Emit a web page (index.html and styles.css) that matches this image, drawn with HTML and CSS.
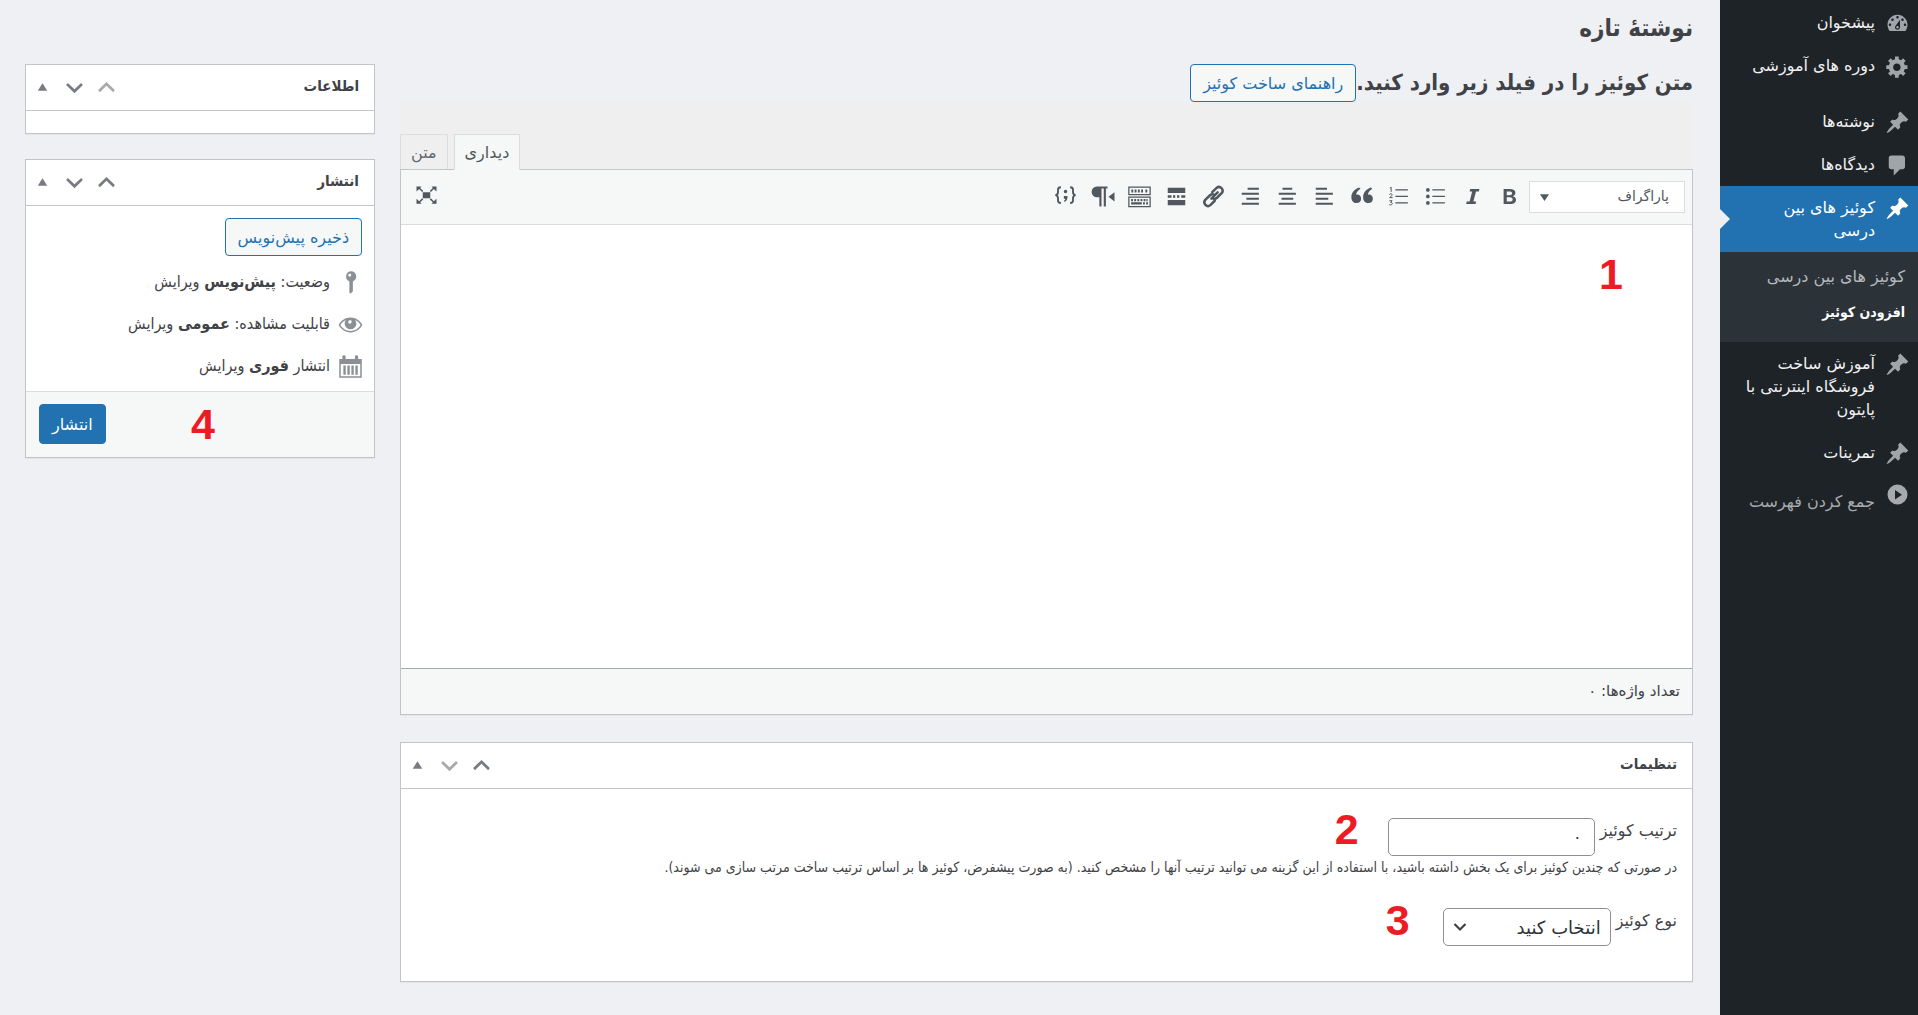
FILE: index.html
```html
<!DOCTYPE html>
<html lang="fa" dir="rtl">
<head>
<meta charset="utf-8">
<meta name="viewport" content="width=device-width, initial-scale=1">
<title>نوشتهٔ تازه</title>
<link rel="stylesheet" href="styles.css">
</head>
<body>
<svg class="sprite" aria-hidden="true">
  <symbol id="i-dashboard" viewBox="0 0 20 20"><path fill-rule="evenodd" d="M3.76 16h12.48c1.1-1.37 1.76-3.11 1.76-5 0-4.42-3.58-8-8-8s-8 3.58-8 8c0 1.89.66 3.63 1.76 5zM10 4c.55 0 1 .45 1 1s-.45 1-1 1-1-.45-1-1 .45-1 1-1zM6 6c.55 0 1 .45 1 1s-.45 1-1 1-1-.45-1-1 .45-1 1-1zm8 0c.55 0 1 .45 1 1s-.45 1-1 1-1-.45-1-1 .45-1 1-1zm-5.37 5.55L12 7v6c0 1.1-.9 2-2 2s-2-.9-2-2c0-.57.24-1.08.63-1.45zM4 10c.55 0 1 .45 1 1s-.45 1-1 1-1-.45-1-1 .45-1 1-1zm12 0c.55 0 1 .45 1 1s-.45 1-1 1-1-.45-1-1 .45-1 1-1zm-5 3c0-.55-.45-1-1-1s-1 .45-1 1 .45 1 1 1 1-.45 1-1z"/></symbol>
  <symbol id="i-gear" viewBox="0 0 20 20"><path fill-rule="evenodd" d="M18 12h-2.18c-.17.7-.44 1.35-.81 1.93l1.54 1.54-2.1 2.1-1.54-1.54c-.58.36-1.23.63-1.91.79V19H8v-2.18c-.68-.16-1.33-.43-1.91-.79l-1.54 1.54-2.12-2.12 1.54-1.54c-.36-.58-.63-1.23-.79-1.91H1V9.03h2.17c.16-.7.44-1.35.8-1.94L2.43 5.55l2.1-2.1 1.54 1.54c.58-.37 1.24-.64 1.93-.81V2h3v2.18c.68.16 1.33.43 1.91.79l1.54-1.54 2.12 2.12-1.54 1.54c.36.59.64 1.24.8 1.94H18V12zm-8.5 1.5c1.66 0 3-1.34 3-3s-1.34-3-3-3-3 1.34-3 3 1.34 3 3 3z"/></symbol>
  <symbol id="i-pin" viewBox="0 0 20 20"><path d="M10.44 3.02l1.82-1.82 6.36 6.35-1.83 1.82c-1.05-.68-2.48-.57-3.41.36l-.75.75c-.92.93-1.04 2.35-.35 3.41l-1.83 1.82-2.41-2.41-2.8 2.79c-.42.42-3.38 2.71-3.8 2.29s1.86-3.39 2.28-3.81l2.79-2.79L4.1 9.36l1.83-1.82c1.05.69 2.48.57 3.4-.36l.75-.75c.93-.92 1.05-2.35.36-3.41z"/></symbol>
  <symbol id="i-comment" viewBox="0 0 20 20"><path d="M5 2h9c1.1 0 2 .9 2 2v7c0 1.1-.9 2-2 2h-2l-5 5v-5H5c-1.1 0-2-.9-2-2V4c0-1.1.9-2 2-2z"/></symbol>
  <symbol id="i-collapse" viewBox="0 0 20 20"><path fill-rule="evenodd" d="M10 2a8 8 0 1 0 0 16 8 8 0 0 0 0-16zM8 6.3l5.6 3.9L8 14z"/></symbol>
  <symbol id="i-up" viewBox="0 0 20 20"><path d="M10 5.500l6.700 6.500-1.400 1.700L10 8.600l-5.300 5.100L3.300 12z"/></symbol>
  <symbol id="i-down" viewBox="0 0 20 20"><path d="M10 14.500l6.700-6.500-1.400-1.700L10 11.400 4.700 6.300 3.300 8z"/></symbol>
  <symbol id="i-toggle" viewBox="0 0 20 20"><path d="M10 6.500l3.800 6H6.200z"/></symbol>
  <symbol id="i-caret" viewBox="0 0 10 10"><path d="M0 1.500h10L5 9z"/></symbol>
  <symbol id="i-chevron" viewBox="0 0 14 14"><path d="M1.500 4l5.500 5.500L12.500 4" fill="none" stroke="currentColor" stroke-width="2.200"/></symbol>
  <symbol id="i-key" viewBox="0 0 20 20"><path fill-rule="evenodd" d="M10.500 1a4.200 4.200 0 0 1 1.400 8.100V17l-2 2-.8-1V9.100A4.200 4.200 0 0 1 10.500 1zM9.300 2.900a1.200 1.200 0 1 0 .1 2.400 1.200 1.200 0 0 0-.1-2.400z"/></symbol>
  <symbol id="i-eye" viewBox="0 0 20 20"><path fill-rule="evenodd" d="M10 4.400c4.300 0 7.900 2.700 9.500 6-1.600 3.200-5.200 5.900-9.500 5.900S2.100 13.600.5 10.400c1.600-3.300 5.200-6 9.500-6zM6.300 6.300c-1.900.8-3.500 2.300-4.400 4.100 1.500 2.700 4.500 4.700 8.100 4.700s6.600-2 8.100-4.700c-.9-1.800-2.500-3.300-4.400-4.100a4.700 4.700 0 1 1-7.400 0zM9.500 6.500a1.400 1.400 0 1 0 .1 2.800 1.400 1.400 0 0 0-.1-2.800z"/></symbol>
  <symbol id="i-calendar" viewBox="0 0 20 20"><path fill-rule="evenodd" d="M1 4h2.500V2.200c0-1.600 2.600-1.600 2.600 0V4h7.400V2.200c0-1.600 2.600-1.600 2.600 0V4H19v15H1zM2.200 8v9.800h15.600V8zM4.300 9.200h1.900v7.300H4.300zm3.200 0h1.900v7.300H7.500zm3.200 0h1.900v7.300h-1.900zm3.200 0h1.900v7.300h-1.900z"/></symbol>
  <symbol id="t-bold" viewBox="0 0 20 20"><path fill-rule="evenodd" d="M5.300 4h4.800c3 0 4.600 1 4.600 3 0 1.500-.8 2.400-2.200 2.700 1.700.3 2.700 1.200 2.700 2.900 0 2.200-1.700 3.400-4.700 3.400H5.300zm2.500 1.900v3h2.100c1.500 0 2.200-.5 2.200-1.500s-.8-1.500-2.300-1.500zm0 4.700V14h2.400c1.500 0 2.300-.6 2.300-1.700s-.8-1.700-2.400-1.700z"/></symbol>
  <symbol id="t-italic" viewBox="0 0 20 20"><path d="M8.200 4h7.300l-.4 1.900h-2.300L10.700 14h2.200l-.5 2H4.900l.5-2h2.300l2-8.100H7.700z"/></symbol>
  <symbol id="t-ul" viewBox="0 0 20 20"><path d="M3.900 3.200a1.500 1.500 0 1 1 0 3 1.500 1.500 0 0 1 0-3zm0 5.200a1.500 1.500 0 1 1 0 3 1.500 1.500 0 0 1 0-3zm0 5.200a1.500 1.500 0 1 1 0 3 1.500 1.500 0 0 1 0-3zM7.500 4.200h10v1h-10zm0 5.200h10v1h-10zm0 5.200h10v1h-10z"/></symbol>
  <symbol id="t-ol" viewBox="0 0 20 20"><path d="M7.500 4.200h10v1h-10zm0 5.200h10v1h-10zm0 5.200h10v1h-10z"/><path fill="none" stroke="currentColor" stroke-width=".8" d="M3.100 3.300l1-.7v3.700M2.700 8.600c.3-1.200 2.500-1 2.200.3-.2.700-1.300 1.300-2 2h2.400M2.700 13.400h2.200l-1.200 1.300c2.200 0 1.600 2.700-1.100 1.800"/></symbol>
  <symbol id="t-quote" viewBox="0 0 20 20"><path d="M9.200 3.800C6.800 5.200 5.800 7 5.700 8.500c2.200-.6 4 .8 4 3.200 0 2.100-1.500 3.500-3.600 3.500-2.500 0-4.200-1.800-4.200-4.700 0-3.300 2.100-6.100 6.200-7.700zM18.600 3.800c-2.400 1.400-3.400 3.200-3.500 4.700 2.200-.6 4 .8 4 3.200 0 2.100-1.500 3.500-3.600 3.500-2.500 0-4.200-1.800-4.200-4.700 0-3.300 2.100-6.100 6.200-7.700z"/></symbol>
  <symbol id="t-left" viewBox="0 0 20 20"><path d="M3 3h9v1.600H3zm0 4h13.700v1.600H3zm0 4h10v1.600H3zm0 4h13.700v1.600H3z"/></symbol>
  <symbol id="t-center" viewBox="0 0 20 20"><path d="M6 3h7.800v1.600H6zM3 7h13.700v1.600H3zm2.200 4h9.400v1.600H5.200zM3 15h13.700v1.600H3z"/></symbol>
  <symbol id="t-right" viewBox="0 0 20 20"><path d="M7.700 3h9v1.600h-9zM3 7h13.700v1.600H3zm3.700 4h10v1.600h-10zM3 15h13.700v1.600H3z"/></symbol>
  <symbol id="t-link" viewBox="0 0 20 20"><g fill="none" stroke="currentColor" stroke-width="2" stroke-linecap="round"><path d="M8.300 11.700l5-5"/><path d="M9 6.500l3.500-3.400c2.600-2.300 6.400 1.400 4 4.200l-3.700 3.700c-.9.800-2.100 1-3.100.5"/><path d="M11 13.400l-3.500 3.500c-2.700 2.300-6.400-1.500-4.100-4.200l3.800-3.700c.9-.8 2.100-1 3.100-.5"/></g></symbol>
  <symbol id="t-more" viewBox="0 0 20 20"><path d="M3 3h14v4.200H3zm0 6h3v2H3zm4.200 0H9v2H7.200zm3.200 0h1.900v2h-1.900zm3.400 0H17v2h-3.200zM3 12.800h14V17H3z"/></symbol>
  <symbol id="t-kitchen" viewBox="0 0 20 20"><path fill-rule="evenodd" d="M1 2h18v7H1zm1 1v5h16V3zm1.500 1.300H5v2.400H3.500zm2.600 0h1.500v2.400H6.100zm2.600 0h1.500v2.400H8.700zm2.600 0h1.500v2.400h-1.500zm3.400 0h1.500v2.400h-1.500zM1 10h18v8.500H1zm1 1v6.500h16V11zm1.300 1h1.500v1.700H3.300zm2.500 0h1.500v1.700H5.800zm2.500 0h1.500v1.700H8.300zm2.500 0h1.500v1.700h-1.500zm2.500 0h1.500v1.700h-1.500zm2.200 0h1v1.700h-1zM3.300 14.600h8.500v1.800H3.300zm9.500 0h1.500v1.800h-1.500zm2.500 0h1.500v1.800h-1.500z"/></symbol>
  <symbol id="t-ltr" viewBox="0 0 20 20"><path d="M5.600 2H14v1.600h-1.300V18H11V3.600H9.200V18H7.500v-7.400H5.600a4.300 4.300 0 0 1 0-8.600zM19.600 6.500v7.400L14.800 10.200z"/></symbol>
  <symbol id="t-code" viewBox="0 0 20 20"><g fill="none" stroke="currentColor" stroke-width="1.500"><path d="M6.300 2.600c-1.700 0-2.300.5-2.300 2v2c0 1.300-.5 2-2 2.300 1.500.3 2 1 2 2.300v2c0 1.500.6 2 2.300 2M13.700 2.600c1.700 0 2.300.5 2.300 2v2c0 1.300.5 2 2 2.300-1.500.3-2 1-2 2.300v2c0 1.500-.6 2-2.300 2"/></g><path d="M10 4.600a1.400 1.400 0 1 1 0 2.800 1.400 1.400 0 0 1 0-2.800zM8.700 9.500h2.900c.2 2.500-.8 4.200-2.600 4.700l-.3-.9c.8-.4 1.100-.8 1.100-1.600H8.700z"/></symbol>
  <symbol id="t-full" viewBox="0 0 20 20"><path d="M7 6.500h6v4.800H7zM2 2h4L4.900 3.200l2.500 2.300-.9.900L4.100 4 2 6zm16 0h-4l1.100 1.200-2.500 2.300.9.900L15.900 4 18 6zM2 15.800h4l-1.100-1.200 2.500-2.300-.9-.9-2.400 2.400-2.100-2zm16 0h-4l1.100-1.200-2.500-2.300.9-.9 2.400 2.400 2.100-2z"/></symbol>
</svg>

<div class="shell">
  <nav class="menu" aria-label="فهرست مدیریت">
    <a class="menu-item" href="#"><svg class="icon"><use href="#i-dashboard"/></svg><span>پیشخوان</span></a>
    <a class="menu-item menu-group-end" href="#"><svg class="icon"><use href="#i-gear"/></svg><span>دوره های آموزشی</span></a>
    <a class="menu-item" href="#"><svg class="icon"><use href="#i-pin"/></svg><span>نوشته‌ها</span></a>
    <a class="menu-item" href="#"><svg class="icon"><use href="#i-comment"/></svg><span>دیدگاه‌ها</span></a>
    <a class="menu-item menu-current" href="#"><svg class="icon"><use href="#i-pin"/></svg><span>کوئیز های بین درسی</span></a>
    <div class="submenu">
      <a class="submenu-item" href="#">کوئیز های بین درسی</a>
      <a class="submenu-item submenu-current" href="#">افزودن کوئیز</a>
    </div>
    <a class="menu-item" href="#"><svg class="icon"><use href="#i-pin"/></svg><span>آموزش ساخت فروشگاه اینترنتی با پایتون</span></a>
    <a class="menu-item" href="#"><svg class="icon"><use href="#i-pin"/></svg><span>تمرینات</span></a>
    <button class="menu-collapse" type="button"><svg class="icon"><use href="#i-collapse"/></svg><span>جمع کردن فهرست</span></button>
  </nav>

  <main class="content">
    <h1 class="page-title">نوشتهٔ تازه</h1>
    <div class="columns">
      <div class="primary">
        <div class="lead">
          <h2 class="lead-title">متن کوئیز را در فیلد زیر وارد کنید.</h2>
          <button class="button" type="button">راهنمای ساخت کوئیز</button>
        </div>

        <section class="editor">
          <div class="tabs">
            <button class="tab tab-active" type="button">دیداری</button>
            <button class="tab" type="button">متن</button>
          </div>
          <div class="editor-box">
            <div class="toolbar">
              <div class="format">
                <select class="format-select" aria-label="قالب"><option>پاراگراف</option></select>
                <svg class="format-caret"><use href="#i-caret"/></svg>
              </div>
              <button class="tool" type="button" aria-label="ضخیم"><svg class="icon"><use href="#t-bold"/></svg></button>
              <button class="tool" type="button" aria-label="مورب"><svg class="icon"><use href="#t-italic"/></svg></button>
              <button class="tool" type="button" aria-label="فهرست نقطه‌ای"><svg class="icon"><use href="#t-ul"/></svg></button>
              <button class="tool" type="button" aria-label="فهرست شماره‌ای"><svg class="icon"><use href="#t-ol"/></svg></button>
              <button class="tool" type="button" aria-label="نقل قول"><svg class="icon"><use href="#t-quote"/></svg></button>
              <button class="tool" type="button" aria-label="چپ‌چین"><svg class="icon"><use href="#t-left"/></svg></button>
              <button class="tool" type="button" aria-label="وسط‌چین"><svg class="icon"><use href="#t-center"/></svg></button>
              <button class="tool" type="button" aria-label="راست‌چین"><svg class="icon"><use href="#t-right"/></svg></button>
              <button class="tool" type="button" aria-label="پیوند"><svg class="icon"><use href="#t-link"/></svg></button>
              <button class="tool" type="button" aria-label="ادامه"><svg class="icon"><use href="#t-more"/></svg></button>
              <button class="tool" type="button" aria-label="نوار ابزار"><svg class="icon"><use href="#t-kitchen"/></svg></button>
              <button class="tool" type="button" aria-label="چپ به راست"><svg class="icon"><use href="#t-ltr"/></svg></button>
              <button class="tool" type="button" aria-label="کد"><svg class="icon"><use href="#t-code"/></svg></button>
              <button class="tool tool-end" type="button" aria-label="تمام صفحه"><svg class="icon"><use href="#t-full"/></svg></button>
            </div>
            <div class="writing">
              <textarea class="writing-area" aria-label="متن کوئیز"></textarea>
              <span class="mark mark-1">1</span>
            </div>
            <div class="statusbar">تعداد واژه‌ها: ۰</div>
          </div>
        </section>

        <section class="panel">
          <header class="panel-head">
            <h2 class="panel-title">تنظیمات</h2>
            <div class="panel-actions">
              <button class="panel-action" type="button" aria-label="بالا"><svg class="icon"><use href="#i-up"/></svg></button>
              <button class="panel-action panel-action-off" type="button" aria-label="پایین"><svg class="icon"><use href="#i-down"/></svg></button>
              <button class="panel-action" type="button" aria-label="بستن"><svg class="icon"><use href="#i-toggle"/></svg></button>
            </div>
          </header>
          <div class="settings">
            <div class="field">
              <label class="field-label" for="quiz-order">ترتیب کوئیز</label>
              <div class="control">
                <input class="field-input" id="quiz-order" type="text" value="۰">
                <span class="mark mark-2">2</span>
              </div>
            </div>
            <p class="hint">در صورتی که چندین کوئیز برای یک بخش داشته باشید، با استفاده از این گزینه می توانید ترتیب آنها را مشخص کنید. (به صورت پیشفرض، کوئیز ها بر اساس ترتیب ساخت مرتب سازی می شوند).</p>
            <div class="field">
              <label class="field-label" for="quiz-type">نوع کوئیز</label>
              <div class="control">
                <select class="field-select" id="quiz-type"><option>انتخاب کنید</option></select>
                <svg class="select-arrow"><use href="#i-chevron"/></svg>
                <span class="mark mark-3">3</span>
              </div>
            </div>
          </div>
        </section>
      </div>

      <aside class="secondary">
        <section class="panel">
          <header class="panel-head">
            <h2 class="panel-title">اطلاعات</h2>
            <div class="panel-actions">
              <button class="panel-action panel-action-off" type="button" aria-label="بالا"><svg class="icon"><use href="#i-up"/></svg></button>
              <button class="panel-action" type="button" aria-label="پایین"><svg class="icon"><use href="#i-down"/></svg></button>
              <button class="panel-action" type="button" aria-label="بستن"><svg class="icon"><use href="#i-toggle"/></svg></button>
            </div>
          </header>
          <div class="panel-empty"></div>
        </section>

        <section class="panel">
          <header class="panel-head">
            <h2 class="panel-title">انتشار</h2>
            <div class="panel-actions">
              <button class="panel-action" type="button" aria-label="بالا"><svg class="icon"><use href="#i-up"/></svg></button>
              <button class="panel-action" type="button" aria-label="پایین"><svg class="icon"><use href="#i-down"/></svg></button>
              <button class="panel-action" type="button" aria-label="بستن"><svg class="icon"><use href="#i-toggle"/></svg></button>
            </div>
          </header>
          <div class="publish">
            <button class="button" type="button">ذخیره پیش‌نویس</button>
            <ul class="facts">
              <li class="fact"><svg class="icon"><use href="#i-key"/></svg><span>وضعیت: <b>پیش‌نویس</b> <a class="fact-edit" href="#">ویرایش</a></span></li>
              <li class="fact"><svg class="icon"><use href="#i-eye"/></svg><span>قابلیت مشاهده: <b>عمومی</b> <a class="fact-edit" href="#">ویرایش</a></span></li>
              <li class="fact"><svg class="icon"><use href="#i-calendar"/></svg><span>انتشار <b>فوری</b> <a class="fact-edit" href="#">ویرایش</a></span></li>
            </ul>
          </div>
          <footer class="publish-foot">
            <button class="button button-primary" type="button">انتشار</button>
            <span class="mark mark-4">4</span>
          </footer>
        </section>
      </aside>
    </div>
  </main>
</div>
</body>
</html>
```
FILE: styles.css
```css
:root {
  --regular: "DejaVu Sans", sans-serif;
  --condensed: "DejaVu Sans Condensed", "DejaVu Sans", sans-serif;
}

* { box-sizing: border-box; }

body {
  margin: 0;
  background: #eff0f3;
  color: #3f4246;
  font: 16px/23px var(--regular);
}

button, input, select, textarea { font: inherit; color: inherit; margin: 0; }
button { cursor: pointer; }
a { color: inherit; text-decoration: none; }
h1, h2, p, ul { margin: 0; padding: 0; }

.sprite { display: none; }
.icon { display: block; flex: none; width: 25px; height: 25px; fill: currentColor; }

.shell { display: flex; min-height: 100vh; }

/* Admin menu */
.menu { flex: none; width: 198px; padding-top: 1px; background: #1e2327; color: #f0f0f1; }
.menu-item { display: flex; gap: 10px; padding: 10px 8px 10px 22px; }
.menu-item .icon { color: #a0a5aa; }
.menu-item .icon, .menu-collapse .icon { margin-bottom: -2px; }
.menu-group-end { margin-bottom: 13px; }
.menu-current { position: relative; background: #2271b1; color: #fff; }
.menu-current .icon { color: #fff; }
.menu-current::after {
  content: "";
  position: absolute;
  left: 0;
  top: 23px;
  border: 10px solid transparent;
  border-left-color: #eff0f3;
  border-right-width: 0;
}
.submenu { display: flex; flex-direction: column; gap: 13px; padding: 13px 13px 18px; background: #2c3338; }
.submenu-item { color: #b4b9be; }
.submenu-current { color: #fff; font: 700 14px/23px var(--condensed); }
.menu-collapse {
  display: flex;
  gap: 10px;
  width: 100%;
  padding: 8px;
  border: 0;
  background: none;
  color: #a7aaad;
  text-align: right;
  white-space: nowrap;
}
.menu-collapse span { padding-top: 8px; }

/* Page */
.content { flex: 1; min-width: 0; padding: 8px 27px 32px 25px; }
.page-title { padding-bottom: 16px; font: 700 24px/40px var(--condensed); }
.columns { display: grid; grid-template-columns: minmax(0, 1fr) 350px; gap: 25px; align-items: start; }
.primary, .secondary { display: flex; flex-direction: column; }
.primary { gap: 27px; }
.secondary { gap: 25px; }
.lead { display: flex; align-items: center; margin-bottom: -27px; }
.lead-title { font: 700 22px/36px var(--condensed); }

.button {
  min-height: 38px;
  padding: 0 12px;
  border: 1px solid #2271b1;
  border-radius: 4px;
  background: #f6f7f7;
  color: #2271b1;
  white-space: nowrap;
}
.button-primary { min-height: 40px; background: #2271b1; color: #fff; }

/* Editor */
.editor { padding-top: 32px; background: #efefef; }
.tabs { display: flex; justify-content: flex-end; gap: 6px; }
.tab {
  height: 35px;
  padding: 0 10px;
  border: 1px solid #dcdcde;
  border-bottom: 0;
  background: #efefef;
  color: #646970;
}
.tab-active { height: 36px; margin-bottom: -1px; background: #f6f7f7; color: #50575e; z-index: 1; }
.editor-box { border: 1px solid #c3c4c7; box-shadow: 0 1px 1px rgba(0, 0, 0, .04); }
.toolbar {
  display: flex;
  align-items: center;
  gap: 2px;
  padding: 10px 7px 11px 8px;
  border-bottom: 1px solid #dcdcde;
  background: #f6f7f7;
  color: #50575e;
}
.format { position: relative; }
.format-select {
  display: block;
  width: 156px;
  height: 32px;
  padding: 0 15px;
  border: 1px solid #dcdcde;
  border-radius: 0;
  background: #fff;
  font-size: 14px;
  appearance: none;
}
.format-caret { position: absolute; left: 11px; top: 12px; width: 9px; height: 9px; fill: currentColor; }
.tool { width: 35px; padding: 4px 5px; border: 0; background: none; }
.tool-end { margin-right: auto; }
.writing { position: relative; }
.writing-area {
  display: block;
  width: 100%;
  height: 443px;
  padding: 12px;
  border: 0;
  outline: 0;
  background: #fff;
  resize: none;
}
.statusbar { padding: 11px 12px; border-top: 1px solid #a7aaad; background: #f6f7f7; font-size: 15px; }

/* Panels */
.panel { border: 1px solid #c3c4c7; background: #fff; box-shadow: 0 1px 1px rgba(0, 0, 0, .04); }
.panel-head {
  display: flex;
  align-items: center;
  justify-content: space-between;
  height: 46px;
  padding: 0 15px 0 4px;
  border-bottom: 1px solid #c3c4c7;
}
.panel-title { padding-bottom: 3px; font: 700 15px/23px var(--condensed); }
.panel-actions { display: flex; gap: 7px; color: #787c82; }
.panel-action { padding: 0; border: 0; background: none; }
.panel-action-off { color: #a7aaad; }
.panel-empty { height: 22px; }

.settings { padding: 29px 15px 35px; }
.field { display: flex; align-items: flex-start; gap: 5px; }
.field-label { padding-top: 1px; }
.control { position: relative; }
.field-input, .field-select {
  display: block;
  height: 38px;
  padding: 0 12px;
  border: 1px solid #8c8f94;
  border-radius: 5px;
  background: #fff;
  color: #2c3338;
}
.field-input { width: 207px; }
.field-select { width: 168px; padding: 0 9px; font-size: 18px; appearance: none; }
.select-arrow { position: absolute; left: 10px; top: 12px; width: 14px; height: 14px; }
.hint { margin-bottom: 29px; font: 14px/23px var(--condensed); }

.publish { padding: 12px; }
.facts { display: flex; flex-direction: column; gap: 17px; padding-top: 14px; list-style: none; }
.fact { display: flex; gap: 8px; font-family: var(--condensed); }
.fact .icon { color: #8c8f94; margin-right: -1px; }
.publish-foot {
  position: relative;
  display: flex;
  justify-content: flex-end;
  padding: 12px 13px 13px;
  border-top: 1px solid #dcdcde;
  background: #f6f7f7;
}

/* Step numbers laid over the form */
.mark {
  position: absolute;
  color: #ed1c24;
  font: 700 43px/43px "Liberation Sans", sans-serif;
  pointer-events: none;
}
.mark-1 { right: 69px; top: 28px; }
.mark-2 { right: 236px; top: -10px; }
.mark-3 { right: 201px; top: -9px; }
.mark-4 { left: 165px; top: 11px; }
```
